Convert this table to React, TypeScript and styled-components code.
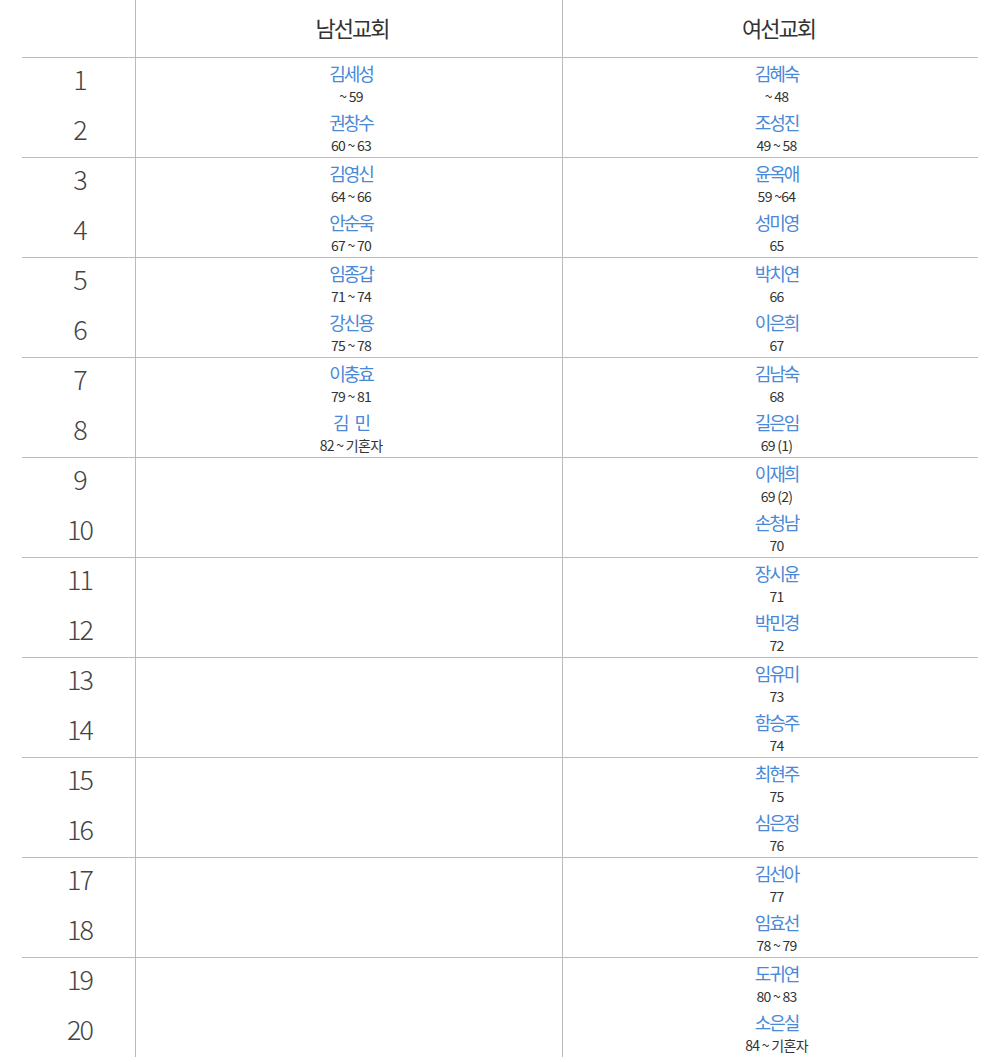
import React from 'react'
import styled, { createGlobalStyle } from 'styled-components'

const GlobalStyle = createGlobalStyle`
  html, body {
    margin: 0;
    padding: 0;
    background: #fff;
    overflow: hidden;
  }
  body {
    font-family: 'Noto Sans CJK KR', 'Noto Sans', sans-serif;
    color: #333;
  }
`

type Entry = { name: string; age: string }

const men: Entry[] = [
  { name: '김세성', age: '~ 59' },
  { name: '권창수', age: '60 ~ 63' },
  { name: '김영신', age: '64 ~ 66' },
  { name: '안순욱', age: '67 ~ 70' },
  { name: '임종갑', age: '71 ~ 74' },
  { name: '강신용', age: '75 ~ 78' },
  { name: '이충효', age: '79 ~ 81' },
  { name: '김 민', age: '82 ~ 기혼자' },
]

const women: Entry[] = [
  { name: '김혜숙', age: '~ 48' },
  { name: '조성진', age: '49 ~ 58' },
  { name: '윤옥애', age: '59 ~64' },
  { name: '성미영', age: '65' },
  { name: '박치연', age: '66' },
  { name: '이은희', age: '67' },
  { name: '김남숙', age: '68' },
  { name: '길은임', age: '69 (1)' },
  { name: '이재희', age: '69 (2)' },
  { name: '손청남', age: '70' },
  { name: '장시윤', age: '71' },
  { name: '박민경', age: '72' },
  { name: '임유미', age: '73' },
  { name: '함승주', age: '74' },
  { name: '최현주', age: '75' },
  { name: '심은정', age: '76' },
  { name: '김선아', age: '77' },
  { name: '임효선', age: '78 ~ 79' },
  { name: '도귀연', age: '80 ~ 83' },
  { name: '소은실', age: '84 ~ 기혼자' },
]

const Page = styled.div`
  padding: 0 22px;
  height: 1062px;
  box-sizing: border-box;
`

const Table = styled.div`
  width: 956px;
  display: flex;
  flex-direction: column;
`

const Row = styled.div<{ $extra?: number }>`
  display: grid;
  grid-template-columns: 114px 427px 415px;
  border-top: 1px solid #bbb;
  padding-bottom: ${({ $extra }) => $extra ?? 0}px;
  &:first-child {
    border-top: none;
  }
`

const Cell = styled.div<{ $shift?: number }>`
  display: flex;
  flex-direction: column;
  box-sizing: border-box;
  padding-left: ${({ $shift }) => $shift ?? 0}px;
  &:not(:last-child) {
    border-right: 1px solid #bbb;
  }
`

const HeadCell = styled(Cell)`
  height: 57px;
  align-items: center;
  justify-content: center;
  padding-bottom: 4px;
  font-size: 22px;
  letter-spacing: -2px;
  color: #333;
`

const Slot = styled.div`
  height: 49.5px;
  display: flex;
  flex-direction: column;
  align-items: center;
  justify-content: center;
`

const Num = styled(Slot)`
  font-size: 27px;
  font-weight: 300;
  letter-spacing: -2px;
  color: #444;
  padding-bottom: 8px;
  padding-left: 2px;
  box-sizing: border-box;
`

const Name = styled.div`
  font-size: 18px;
  line-height: 26px;
  letter-spacing: -2px;
  word-spacing: 5px;
  white-space: pre;
  color: #4a89d8;
`

const Age = styled.div`
  font-size: 14px;
  line-height: 20px;
  letter-spacing: -0.7px;
  color: #333;
`

function Person({ entry }: { entry?: Entry }) {
  return (
    <Slot>
      {entry && (
        <>
          <Name>{entry.name}</Name>
          <Age>{entry.age}</Age>
        </>
      )}
    </Slot>
  )
}

export default function App() {
  const groups = Array.from({ length: 10 }, (_, i) => i)
  return (
    <Page>
      <GlobalStyle />
      <Table>
        <Row>
          <HeadCell />
          <HeadCell $shift={6}>남선교회</HeadCell>
          <HeadCell $shift={16}>여선교회</HeadCell>
        </Row>
        {groups.map((g) => (
          <Row key={g} $extra={g === 9 ? 6 : 0}>
            <Cell>
              <Num>{g * 2 + 1}</Num>
              <Num>{g * 2 + 2}</Num>
            </Cell>
            <Cell $shift={4}>
              <Person entry={men[g * 2]} />
              <Person entry={men[g * 2 + 1]} />
            </Cell>
            <Cell $shift={12}>
              <Person entry={women[g * 2]} />
              <Person entry={women[g * 2 + 1]} />
            </Cell>
          </Row>
        ))}
      </Table>
    </Page>
  )
}
